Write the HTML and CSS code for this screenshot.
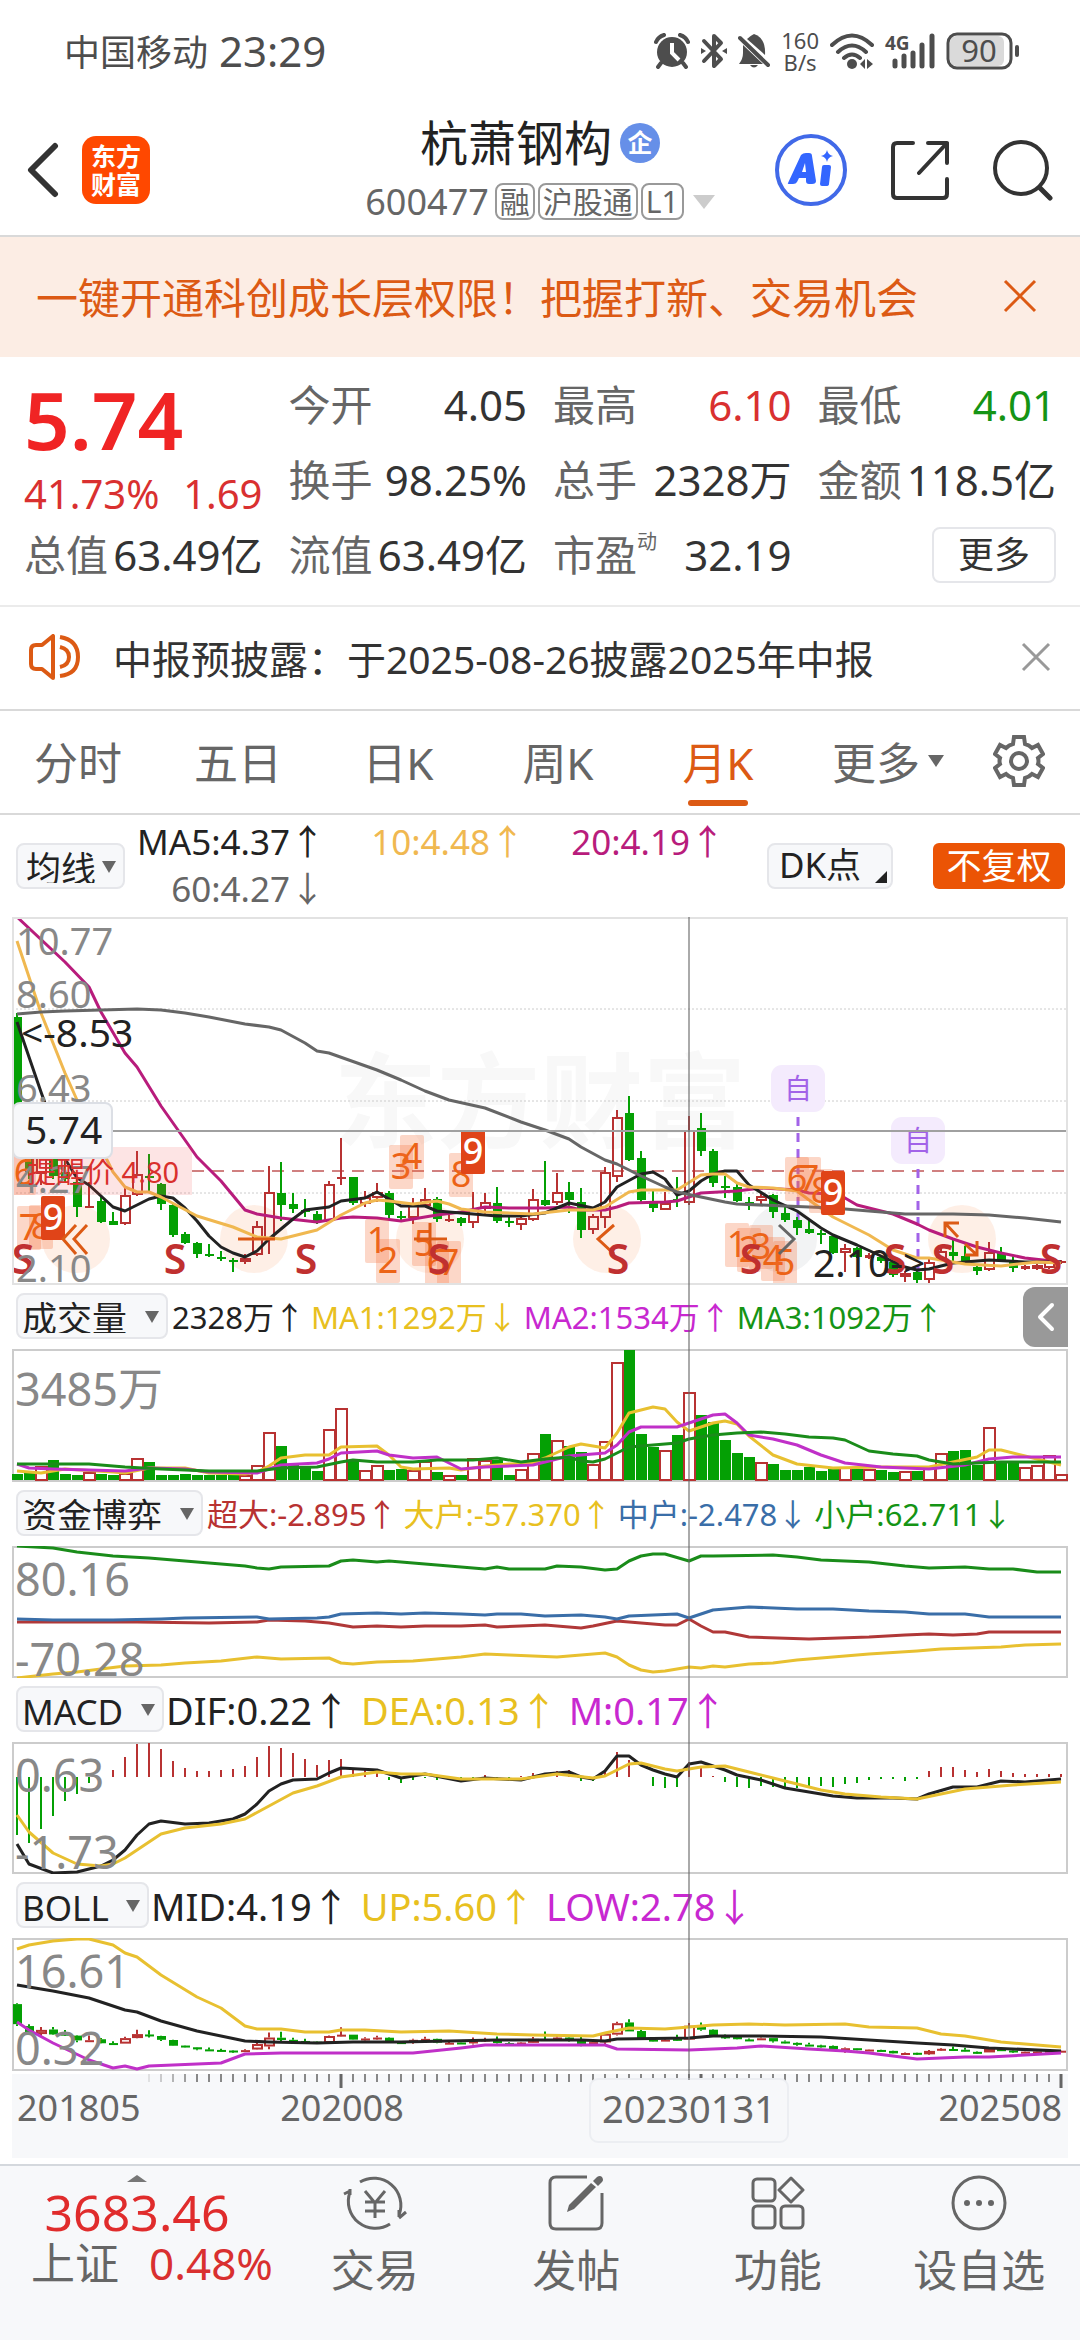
FILE: index.html
```html
<!DOCTYPE html>
<html lang="zh-CN">
<head>
  <meta charset="UTF-8" />
  <meta name="viewport" content="width=device-width, initial-scale=1.0" />
  <title>杭萧钢构 600477</title>
  <link rel="stylesheet" href="styles.css">
</head>
<body>

  <!-- Status bar -->
  <div class="status-bar">
    <div class="status-left">
      <span class="carrier">中国移动</span>
      <span class="clock">23:29</span>
    </div>
    <div class="status-right">
      <svg width="36" height="36" viewBox="0 0 36 36">
        <circle cx="18" cy="19" r="15" fill="#4d4d4d"/>
        <path d="M2 9 Q4 4 10 2 M34 9 Q32 4 26 2 M7 30 L4 34 M29 30 L32 34" stroke="#4d4d4d" stroke-width="4" stroke-linecap="round" fill="none"/>
        <path d="M18 10 V20 L25 27" stroke="#fff" stroke-width="4" fill="none"/>
      </svg>
      <svg width="26" height="36" viewBox="0 0 26 36">
        <path d="M3 8 L20 26 L13 33 V3 L20 10 L3 28" stroke="#4d4d4d" stroke-width="4" stroke-linejoin="round" stroke-linecap="round" fill="none"/>
        <path d="M0 15 L5 18 L0 21 Z M26 15 L21 18 L26 21 Z" fill="#4d4d4d"/>
      </svg>
      <svg width="32" height="36" viewBox="0 0 32 36">
        <path d="M9 6 Q12 3 16 1 Q28 5 27 22 Z" fill="#4d4d4d"/>
        <path d="M5 12 L25 31 H1 Q5 26 5 20 Z" fill="#4d4d4d"/>
        <path d="M2 5 L30 32" stroke="#4d4d4d" stroke-width="4" stroke-linecap="round"/>
        <path d="M12 32 H20 Q16 37 12 32 Z" fill="#4d4d4d"/>
      </svg>
      <span class="net-speed">160<br>B/s</span>
      <svg width="44" height="36" viewBox="0 0 44 36">
        <path d="M2 12 Q22 -7 42 12 M8 19 Q22 6 36 19 M14 25 Q22 18 30 25" stroke="#4d4d4d" stroke-width="4" stroke-linecap="round" fill="none"/>
        <circle cx="22" cy="31" r="5" fill="#4d4d4d"/>
        <path d="M30 31 L35 26 V36 M37 26 V36 L43 31" fill="#4d4d4d"/>
      </svg>
      <svg class="signal" width="50" height="36" viewBox="0 0 50 36">
        <text x="0" y="17" font-size="19" font-weight="700" fill="#4d4d4d">4G</text>
        <path d="M10 33 V28 M19 33 V23 M28 33 V20 M37 33 V12 M47 33 V3" stroke="#4d4d4d" stroke-width="5" stroke-linecap="round"/>
      </svg>
      <svg width="74" height="38" viewBox="0 0 74 38">
        <rect x="4" y="4" width="54" height="30" rx="6" fill="#dadada"/>
        <rect x="2" y="2" width="63" height="34" rx="9" fill="none" stroke="#4d4d4d" stroke-width="3"/>
        <rect x="69" y="13" width="4" height="12" rx="2" fill="#4d4d4d"/>
        <text x="33" y="30" font-size="31" text-anchor="middle" fill="#4d4d4d">90</text>
      </svg>
    </div>
  </div>

  <!-- Header -->
  <header class="header">
    <div class="header-left">
      <button class="icon-btn" aria-label="返回">
        <svg width="32" height="56" viewBox="0 0 32 56">
          <path d="M28 4 L4 28 L28 52" stroke="#333" stroke-width="6" stroke-linecap="round" stroke-linejoin="round" fill="none"/>
        </svg>
      </button>
      <div class="logo">东方<br>财富</div>
    </div>
    <div class="header-title">
      <h1>杭萧钢构 <span class="badge">企</span></h1>
      <div class="code-row">
        <span class="code">600477</span>
        <span class="tag">融</span>
        <span class="tag">沪股通</span>
        <span class="tag">L1</span>
        <i class="caret"></i>
      </div>
    </div>
    <div class="header-right">
      <button class="icon-btn" aria-label="AI 助手">
        <svg width="72" height="72" viewBox="0 0 72 72">
          <circle cx="36" cy="36" r="34" fill="none" stroke="#4169e8" stroke-width="4"/>
          <path fill="#3366ff" fill-rule="evenodd" d="M13 49 L26 21 Q28 19 31 19 H34 Q37 19 37 22 L41 47 Q41 50 37 50 H34 Q31 50 31 47 V44 H24 L22 48 Q21 50 18 50 H14 Q12 50 13 49 Z M27 38 H31 L30 29 Z"/>
          <path fill="#3366ff" d="M47 33 Q47 31 49 31 H54 Q56 31 56 33 L54 50 Q54 52 51 52 H47 Q45 52 45 50 Z M52 16 Q53 21 58 22 Q53 23 52 28 Q51 23 46 22 Q51 21 52 16 Z"/>
        </svg>
      </button>
      <button class="icon-btn" aria-label="分享">
        <svg width="58" height="60" viewBox="0 0 58 60">
          <path d="M22 3 H6 Q2 3 2 7 V54 Q2 58 6 58 H52 Q56 58 56 54 V39 M37 3 H56 V23 M56 3 L28 33" stroke="#333" stroke-width="4" stroke-linecap="round" stroke-linejoin="round" fill="none"/>
        </svg>
      </button>
      <button class="icon-btn" aria-label="搜索">
        <svg width="60" height="62" viewBox="0 0 60 62">
          <circle cx="28" cy="29" r="26" fill="none" stroke="#333" stroke-width="4"/>
          <path d="M47 49 L57 59" stroke="#333" stroke-width="5" stroke-linecap="round"/>
        </svg>
      </button>
    </div>
  </header>

  <!-- Promo banner -->
  <div class="banner">
    <a href="#">一键开通科创成长层权限！把握打新、交易机会</a>
    <button class="icon-btn" aria-label="关闭">
      <svg width="34" height="34" viewBox="0 0 34 34">
        <path d="M2 2 L32 32 M32 2 L2 32" stroke="#dc5a14" stroke-width="3"/>
      </svg>
    </button>
  </div>

  <!-- Quote -->
  <section class="quote">
    <div class="price-box">
      <div class="price">5.74</div>
      <div class="change"><span>41.73%</span><span>1.69</span></div>
    </div>
    <div class="stat"><span>今开</span><b>4.05</b></div>
    <div class="stat"><span>最高</span><b class="up">6.10</b></div>
    <div class="stat"><span>最低</span><b class="down">4.01</b></div>
    <div class="stat"><span>换手</span><b>98.25%</b></div>
    <div class="stat"><span>总手</span><b>2328万</b></div>
    <div class="stat"><span>金额</span><b>118.5亿</b></div>
    <div class="stat"><span>总值</span><b>63.49亿</b></div>
    <div class="stat"><span>流值</span><b>63.49亿</b></div>
    <div class="stat"><span>市盈<sup>动</sup></span><b>32.19</b></div>
    <div class="stat stat-more"><button class="more-btn">更多</button></div>
  </section>

  <!-- Notice -->
  <div class="notice">
    <svg width="52" height="46" viewBox="0 0 52 46">
      <path d="M24 2 V44 L13 35 H7 Q2 35 2 30 V16 Q2 11 7 11 H13 Z" stroke="#dc5a14" stroke-width="4" stroke-linejoin="round" fill="none"/>
      <path d="M31 3 Q49 6 49 23 Q49 40 31 42 M31 13 Q40 15 40 23 Q40 31 31 33" stroke="#dc5a14" stroke-width="4" fill="none"/>
    </svg>
    <span>中报预披露：于2025-08-26披露2025年中报</span>
    <button class="icon-btn" aria-label="关闭">
      <svg width="30" height="30" viewBox="0 0 30 30">
        <path d="M2 2 L28 28 M28 2 L2 28" stroke="#999" stroke-width="3"/>
      </svg>
    </button>
  </div>

  <!-- Period tabs -->
  <nav class="tabs">
    <button>分时</button>
    <button>五日</button>
    <button>日K</button>
    <button>周K</button>
    <button class="active">月K</button>
    <button class="tab-more">更多<i class="tri"></i></button>
    <button class="tab-gear" aria-label="设置">
      <svg width="52" height="54" viewBox="0 0 52 54">
        <path d="M21 3 H31 L32 10 Q36 11 39 14 L45 11 L50 20 L45 24 Q46 27 45 30 L50 34 L45 43 L39 40 Q36 43 32 44 L31 51 H21 L20 44 Q16 43 13 40 L7 43 L2 34 L7 30 Q6 27 7 24 L2 20 L7 11 L13 14 Q16 11 20 10 Z" stroke="#666" stroke-width="4" fill="none"/>
        <circle cx="26" cy="27" r="8" stroke="#666" stroke-width="4" fill="none"/>
      </svg>
    </button>
  </nav>

  <!-- Moving average row -->
  <div class="ma-row">
    <label class="pick pick-tight"><select aria-label="主图指标"><option>均线</option></select></label>
    <div class="ma-values">
      <span class="c-black">MA5:4.37↑</span>
      <span class="c-amber">10:4.48↑</span>
      <span class="c-pink">20:4.19↑</span>
      <span class="c-gray">60:4.27↓</span>
    </div>
    <button class="dk-btn">DK点</button>
    <button class="fq-btn">不复权</button>
  </div>

  <!-- Charts -->
  <main class="charts">
    <svg class="chart" viewBox="0 0 1056 368">
      <text class="watermark" x="322" y="223">东方财富</text>
      <path class="grid" d="M0 92 H1056 M0 184 H1056 M0 276 H1056"/>
      <path class="alert-line" d="M180 254 H1056"/>
      <g fill="#fde4d6" fill-opacity="0.6">
        <circle cx="64" cy="322" r="34"/>
        <circle cx="242" cy="322" r="34"/>
        <circle cx="418" cy="322" r="34"/>
        <circle cx="595" cy="322" r="34"/>
        <circle cx="950" cy="322" r="34"/>
      </g>
      <circle cx="771" cy="322" r="34" fill="#f2f3f4"/>
      <g class="added">
        <path d="M786 200 V303 M906 252 V355"/>
        <rect x="759" y="148" width="54" height="47" rx="11"/>
        <rect x="879" y="200" width="54" height="47" rx="11"/>
        <text x="786" y="182">自</text>
        <text x="906" y="234">自</text>
      </g>
      <g id="candles"></g>
      <g id="priceLines"></g>
      <rect x="0" y="230" width="180" height="48" fill="#f04a4a" fill-opacity="0.15"/>
      <g id="chips"></g>
      <path d="M64 308 L51 322 L64 337 M75 308 L62 322 L75 337 M226 322 H263 M402 322 H435 M418 306 V339 M602 308 L586 322 L602 337 M947 306 H933 V320 M933 306 L946 320 M953 338 H965 V324 M965 338 L953 327" stroke="#dc5a14" stroke-width="3" fill="none"/>
      <path d="M767 308 L782 322 L767 337" stroke="#666" stroke-width="3" fill="none"/>
      <g class="sell">
        <text x="11" y="357">S</text>
        <text x="163" y="357">S</text>
        <text x="294" y="357">S</text>
        <text x="427" y="357">S</text>
        <text x="606" y="357">S</text>
        <text x="739" y="357">S</text>
        <text x="883" y="357">S</text>
        <text x="931" y="357">S</text>
        <text x="1039" y="357">S</text>
      </g>
      <g class="axis-label small">
        <text x="4" y="38">10.77</text>
        <text x="4" y="91">8.60</text>
        <text x="4" y="185">6.43</text>
        <text x="4" y="276">4.27</text>
        <text x="4" y="365">2.10</text>
      </g>
      <text class="peak" x="9" y="130">&lt;-8.53</text>
      <text class="peak" x="801" y="360">2.10-&gt;</text>
      <text x="15" y="266" font-size="29" fill="#d9302c">提醒价 4.80</text>
      <path class="cross" d="M100 214 H1056"/>
      <rect x="1" y="186" width="99" height="55" rx="7" fill="#f7f8fa" stroke="#dcdfe5" stroke-width="2"/>
      <text class="peak" x="13" y="227">5.74</text>
      <rect class="frame" x="1" y="1" width="1054" height="366"/>
    </svg>

    <div class="chart-head narrow">
      <label class="pick"><select aria-label="副图一"><option>成交量</option></select></label>
      <span class="c-black">2328万↑</span>
      <span class="c-yellow">MA1:1292万↓</span>
      <span class="c-purple">MA2:1534万↑</span>
      <span class="c-green">MA3:1092万↑</span>
      <button class="collapse" aria-label="收起">
        <svg width="18" height="30" viewBox="0 0 18 30">
          <path d="M15 3 L3 15 L15 27" stroke="#fff" stroke-width="4" stroke-linecap="round" stroke-linejoin="round" fill="none"/>
        </svg>
      </button>
    </div>
    <svg class="chart" viewBox="0 0 1056 133">
      <rect class="frame thin" x="1" y="1" width="1054" height="131"/>
      <text class="axis-label" x="3" y="57">3485万</text>
      <g id="volumeBars"></g>
      <g id="volumeLines"></g>
    </svg>

    <div class="chart-head narrow">
      <label class="pick"><select aria-label="副图二"><option>资金博弈</option></select></label>
      <span class="c-red">超大:-2.895↑</span>
      <span class="c-yellow">大户:-57.370↑</span>
      <span class="c-blue">中户:-2.478↓</span>
      <span class="c-green">小户:62.711↓</span>
    </div>
    <svg class="chart" viewBox="0 0 1056 132">
      <rect class="frame thin" x="1" y="1" width="1054" height="130"/>
      <g id="fundLines"></g>
      <text class="axis-label" x="3" y="50">80.16</text>
      <text class="axis-label" x="3" y="130">-70.28</text>
    </svg>

    <div class="chart-head">
      <label class="pick"><select aria-label="副图三"><option>MACD</option></select></label>
      <span class="c-black">DIF:0.22↑</span>
      <span class="c-yellow">DEA:0.13↑</span>
      <span class="c-purple">M:0.17↑</span>
    </div>
    <svg class="chart" viewBox="0 0 1056 132">
      <rect class="frame thin" x="1" y="1" width="1054" height="130"/>
      <g id="macdBars"></g>
      <g id="macdLines"></g>
      <text class="axis-label" x="3" y="50">0.63</text>
      <text class="axis-label" x="3" y="127">-1.73</text>
    </svg>

    <div class="chart-head">
      <label class="pick"><select aria-label="副图四"><option>BOLL</option></select></label>
      <span class="c-black">MID:4.19↑</span>
      <span class="c-yellow">UP:5.60↑</span>
      <span class="c-purple">LOW:2.78↓</span>
    </div>
    <svg class="chart" viewBox="0 0 1056 133">
      <rect class="frame thin" x="1" y="1" width="1054" height="131"/>
      <g id="bollCandles"></g>
      <g id="bollLines"></g>
      <text class="axis-label" x="3" y="50">16.61</text>
      <text class="axis-label" x="3" y="127">0.32</text>
    </svg>

    <svg class="chart time-axis" viewBox="0 0 1056 84">
      <g id="ticks"></g>
      <text x="5" y="47">201805</text>
      <text x="330" y="47" text-anchor="middle">202008</text>
      <rect x="578" y="5" width="198" height="63" rx="8" fill="#f7f8fa" stroke="#eceef2" stroke-width="2"/>
      <text class="cur" x="677" y="49" text-anchor="middle">20230131</text>
      <text x="1050" y="47" text-anchor="end">202508</text>
    </svg>
    <div class="crosshair"></div>
  </main>

  <!-- Bottom bar -->
  <footer class="bottom-bar">
    <a class="index-box" href="#">
      <i class="tri-up"></i>
      <strong>3683.46</strong>
      <span class="index-row"><span>上证</span><em>0.48%</em></span>
    </a>
    <a class="nav-item" href="#">
      <svg width="66" height="58" viewBox="0 0 66 58">
        <path d="M18 8 A27 27 0 0 1 57 41 M48 50 A27 27 0 0 1 8 18 M8 17 L2 20 M8 15 V21 M57 44 L64 38 M57 43 V36" stroke="#666" stroke-width="3" fill="none"/>
        <path d="M23 17 L33 29 L43 17 M33 29 V44 M23 28 H43 M23 37 H43" stroke="#666" stroke-width="3" fill="none"/>
      </svg>
      <span>交易</span>
    </a>
    <a class="nav-item" href="#">
      <svg width="58" height="58" viewBox="0 0 58 58">
        <path d="M40 3 H9 Q3 3 3 9 V49 Q3 55 9 55 H49 Q55 55 55 49 V19" stroke="#666" stroke-width="3" fill="none"/>
        <path d="M20 38 L22 31 L44 9 L49 13 L27 35 Z M46 7 L50 3 Q53 1 55 3 Q57 6 55 8 L51 12 Z" fill="#666"/>
      </svg>
      <span>发帖</span>
    </a>
    <a class="nav-item" href="#">
      <svg width="54" height="58" viewBox="0 0 54 58">
        <g stroke="#666" stroke-width="3" fill="none">
          <rect x="2" y="5" width="22" height="22" rx="4"/>
          <rect x="2" y="32" width="22" height="22" rx="4"/>
          <rect x="30" y="32" width="22" height="22" rx="4"/>
          <path d="M40 4 L52 16 L40 28 L28 16 Z" stroke-linejoin="round"/>
        </g>
      </svg>
      <span>功能</span>
    </a>
    <a class="nav-item" href="#">
      <svg width="58" height="58" viewBox="0 0 58 58">
        <circle cx="29" cy="29" r="26" stroke="#666" stroke-width="3" fill="none"/>
        <circle cx="17" cy="29" r="3" fill="#666"/>
        <circle cx="29" cy="29" r="3" fill="#666"/>
        <circle cx="41" cy="29" r="3" fill="#666"/>
      </svg>
      <span>设自选</span>
    </a>
  </footer>

  <script src="script.js"></script>
</body>
</html>
```

FILE: styles.css
```css
* {
  box-sizing: border-box;
}

body {
  margin: 0;
  background: #fff;
  color: #333;
  font-family: "Noto Sans", "Noto Sans CJK SC", sans-serif;
}

button,
select {
  font-family: inherit;
  color: inherit;
  background: none;
  border: none;
  padding: 0;
  margin: 0;
}

a {
  color: inherit;
  text-decoration: none;
}

svg {
  display: block;
  flex-shrink: 0;
}

.icon-btn {
  display: flex;
  align-items: center;
  justify-content: center;
}

/* Status bar */
.status-bar {
  display: flex;
  justify-content: space-between;
  align-items: center;
  height: 104px;
  padding: 0 60px 3px 64px;
  color: #4d4d4d;
}

.status-left,
.status-right {
  display: flex;
  align-items: center;
  gap: 11px;
}

.carrier {
  font-size: 36px;
}

.clock {
  font-size: 42px;
}

.net-speed {
  font-size: 22px;
  line-height: 22px;
  text-align: center;
}

.signal {
  overflow: visible;
}

/* Header */
.header {
  display: grid;
  grid-template-columns: 1fr auto 1fr;
  align-items: center;
  height: 133px;
  padding: 0 27px;
  border-bottom: 2px solid #d9d9d9;
}

.header-left {
  display: flex;
  align-items: center;
  gap: 23px;
}

.logo {
  width: 68px;
  height: 68px;
  padding-top: 6px;
  border-radius: 14px;
  background: #ff4800;
  color: #fff;
  font-size: 25px;
  font-weight: 700;
  line-height: 28px;
  text-align: center;
}

.header-title h1 {
  display: flex;
  align-items: center;
  justify-content: center;
  gap: 8px;
  margin: 0;
  font-size: 48px;
  font-weight: 400;
  line-height: 64px;
  color: #222;
}

.badge {
  width: 40px;
  height: 40px;
  border-radius: 50%;
  background: #668fe8;
  color: #fff;
  font-size: 25px;
  font-weight: 700;
  line-height: 38px;
  text-align: center;
}

.code-row {
  display: flex;
  align-items: center;
  gap: 3px;
  height: 54px;
  color: #666;
}

.code {
  font-size: 36px;
  margin-right: 3px;
}

.tag {
  padding: 0 3px;
  border: 2px solid #999;
  border-radius: 8px;
  font-size: 30px;
  line-height: 33px;
}

.caret {
  margin-left: 6px;
  border: 11px solid transparent;
  border-top: 14px solid #ccc;
  border-bottom: none;
}

.header-right {
  display: flex;
  align-items: center;
  justify-content: flex-end;
  gap: 44px;
}

/* Banner */
.banner {
  display: flex;
  justify-content: space-between;
  align-items: center;
  height: 120px;
  padding: 0 43px 3px 36px;
  background: #fcede4;
  color: #dc5a14;
  font-size: 42px;
}

/* Quote */
.quote {
  display: grid;
  grid-template-columns: repeat(4, 1fr);
  grid-auto-rows: 75px;
  column-gap: 26px;
  padding: 12px 24px 11px;
  border-bottom: 2px solid #ebebeb;
}

.price-box {
  grid-row: span 2;
  color: #f02424;
}

.price {
  font-size: 80px;
  font-weight: 600;
  line-height: 100px;
}

.change {
  display: flex;
  justify-content: space-between;
  font-size: 40px;
  line-height: 50px;
  color: #d93030;
}

.stat {
  display: flex;
  justify-content: space-between;
  align-items: center;
  font-size: 42px;
  line-height: 56px;
  padding-bottom: 3px;
  white-space: nowrap;
  color: #666;
}

.stat b {
  font-weight: 400;
  color: #333;
}

.stat sup {
  font-size: 20px;
  line-height: 0;
  vertical-align: 22px;
}

.stat .up {
  color: #d93030;
}

.stat .down {
  color: #159415;
}

.stat-more {
  justify-content: flex-end;
}

.more-btn {
  width: 124px;
  height: 56px;
  border: 2px solid #e5e6ea;
  border-radius: 8px;
  color: #333;
  font-size: 36px;
  line-height: 48px;
}

/* Notice */
.notice {
  display: flex;
  align-items: center;
  height: 104px;
  padding: 0 29px 2px;
  border-bottom: 2px solid #d9d9d9;
  font-size: 39px;
}

.notice span {
  flex: 1;
  margin-left: 32px;
}

/* Tabs */
.tabs {
  display: grid;
  grid-template-columns: repeat(5, 8fr) 9fr 5fr;
  height: 104px;
  border-bottom: 2px solid #d9d9d9;
}

.tabs button {
  position: relative;
  padding: 0 4px 2px 0;
  font-size: 44px;
  color: #666;
}

.tabs .active {
  color: #dc5a14;
}

.tabs .active::after {
  content: "";
  position: absolute;
  left: 50%;
  bottom: 7px;
  width: 60px;
  height: 6px;
  margin-left: -32px;
  border-radius: 3px;
  background: #dc5a14;
}

.tabs .tab-more,
.tabs .tab-gear {
  display: flex;
  align-items: center;
  justify-content: center;
}

.tabs .tab-gear {
  justify-content: flex-start;
  padding-left: 13px;
}

.tri {
  margin-left: 8px;
  border: 8px solid transparent;
  border-top: 12px solid #666;
  border-bottom: none;
}

/* Moving average row */
.ma-row {
  display: flex;
  align-items: center;
  height: 102px;
  padding: 0 15px 0 16px;
}

.pick {
  position: relative;
  display: flex;
}

.pick select {
  appearance: none;
  height: 46px;
  padding: 0 38px 4px 4px;
  border: 2px solid #e5e6ea;
  border-radius: 8px;
  background: #f7f8fa;
  color: #222;
  font-size: 35px;
}

.pick::after {
  content: "";
  position: absolute;
  right: 9px;
  top: 18px;
  border: 7px solid transparent;
  border-top: 12px solid #666;
  border-bottom: none;
}

.pick-tight select {
  padding: 0 26px 4px 8px;
}

.ma-values {
  display: grid;
  grid-template-columns: 200px 200px 200px;
  justify-items: end;
  flex: 1;
  font-size: 35px;
  line-height: 47px;
  padding-bottom: 2px;
}

.dk-btn {
  position: relative;
  width: 126px;
  height: 46px;
  margin-right: 40px;
  padding: 0 20px 2px 0;
  border: 2px solid #e5e6ea;
  border-radius: 8px;
  background: #f7f8fa;
  color: #222;
  font-size: 35px;
  line-height: 38px;
  white-space: nowrap;
}

.dk-btn::after {
  content: "";
  position: absolute;
  right: 4px;
  bottom: 4px;
  border-left: 12px solid transparent;
  border-bottom: 12px solid #222;
}

.fq-btn {
  width: 132px;
  height: 46px;
  border-radius: 6px;
  background: #eb5405;
  color: #fff;
  font-size: 35px;
  line-height: 42px;
}

.c-black { color: #222; }
.c-gray { color: #666; }
.c-amber { color: #f0b850; }
.c-pink { color: #b81c7c; }
.c-yellow { color: #e8c020; }
.c-purple { color: #c828d0; }
.c-green { color: #159415; }
.c-red { color: #b83232; }
.c-blue { color: #3a6ea8; }

/* Charts */
.charts {
  position: relative;
  padding: 0 12px 6px;
}

.chart {
  width: 100%;
  height: auto;
}

.chart-head {
  position: relative;
  display: flex;
  align-items: center;
  gap: 11px;
  height: 64px;
  padding: 0 0 3px 4px;
  font-size: 38px;
  white-space: nowrap;
}

.chart-head .pick {
  margin-right: -9px;
}

.chart-head.narrow {
  gap: 6px;
  font-size: 31px;
}

.chart-head.narrow .pick {
  margin-right: -2px;
}

.collapse {
  position: absolute;
  right: 0;
  top: 2px;
  width: 45px;
  height: 60px;
  display: flex;
  align-items: center;
  justify-content: center;
  border-radius: 12px 0 0 12px;
  background: #999;
}

.crosshair {
  position: absolute;
  left: 63.7%;
  top: 0;
  bottom: 84px;
  width: 2px;
  background: rgba(100, 100, 100, 0.55);
}

.frame {
  fill: none;
  stroke: #e2e2e2;
  stroke-width: 2;
}

.frame.thin {
  stroke: #ccc;
}

.grid {
  stroke: #ccc;
  stroke-dasharray: 2 2;
}

.alert-line {
  stroke: #d08080;
  stroke-width: 2;
  stroke-dasharray: 12 8;
}

.cross {
  stroke: #a0a0a0;
  stroke-width: 2;
}

.watermark {
  font-size: 103px;
  font-weight: 700;
  fill: #f8f8f8;
}

.axis-label {
  font-size: 45px;
  fill: #888;
}

.axis-label.small {
  font-size: 38px;
}

.peak {
  font-size: 39px;
  fill: #222;
}

.sell {
  font-size: 41px;
  font-weight: 600;
  fill: #c03030;
  text-anchor: middle;
}

.added path {
  stroke: #a263e8;
  stroke-width: 3;
  stroke-dasharray: 9 7;
}

.added rect {
  fill: #f4ebfd;
}

.added text {
  font-size: 28px;
  fill: #a263e8;
  text-anchor: middle;
}

.chip rect {
  fill: #f56a32;
  fill-opacity: 0.27;
}

.chip text {
  font-size: 36px;
  fill: #ec6316;
  text-anchor: middle;
}

.chip.nine rect {
  fill: #e04418;
  fill-opacity: 1;
}

.chip.nine text {
  font-weight: 500;
  fill: #fff;
}

.time-axis {
  margin-top: 3px;
  background: #f7f8fa;
}

.time-axis text {
  font-size: 36px;
  fill: #666;
}

.time-axis .cur {
  font-size: 38px;
}

/* Bottom bar */
.bottom-bar {
  display: grid;
  grid-template-columns: 274px repeat(4, 1fr);
  height: 176px;
  border-top: 2px solid #d4d8dd;
  background: #f7f8fa;
  color: #666;
  font-size: 44px;
}

.index-box {
  display: flex;
  flex-direction: column;
  align-items: center;
  padding-top: 9px;
}

.tri-up {
  border: 10px solid transparent;
  border-bottom: 7px solid #777;
  border-top: none;
}

.index-box strong {
  font-size: 50px;
  font-weight: 400;
  line-height: 60px;
  color: #e02c2c;
}

.index-row {
  display: flex;
  gap: 30px;
  padding-left: 30px;
  line-height: 42px;
}

.index-row em {
  font-style: normal;
  color: #d93030;
}

.nav-item {
  display: flex;
  flex-direction: column;
  align-items: center;
  gap: 8px;
  padding-top: 8px;
  line-height: 60px;
}
```

FILE: script.js
```js
const NS = 'http://www.w3.org/2000/svg';
const STEP = 12;
const RED = '#b83232';
const GREEN = '#04a004';

function add(id, tag, attrs, text) {
  const el = document.createElementNS(NS, tag);
  for (const k in attrs) el.setAttribute(k, attrs[k]);
  if (text) el.textContent = text;
  document.getElementById(id).appendChild(el);
  return el;
}

function xOf(i) {
  return 5 + STEP * i;
}

// "month y, month y, ..." -> polyline
function line(id, color, data) {
  const points = data.split(',').map(p => {
    const [i, y] = p.trim().split(' ').map(Number);
    return xOf(i) + ',' + y;
  }).join(' ');
  add(id, 'polyline', { points, fill: 'none', stroke: color, 'stroke-width': 3, 'stroke-linejoin': 'round' });
}

// colour, high, body top, body bottom, low
const candles = [
  'g 96 100 205 215', 'g 205 215 255 262', 'r 220 235 257 268', 'g 220 233 259 262', 'g 235 255 262 266',
  'g 262 265 290 300', 'r 265 289 290 291', 'g 278 284 305 306', 'g 295 304 308 308', 'r 271 278 307 308',
  'r 234 257 278 279', 'g 237 259 261 275', 'g 266 267 287 293', 'g 287 288 318 320', 'g 315 317 326 327',
  'g 325 326 337 341', 'g 327 337 338 340', 'g 334 340 342 344', 'g 341 343 344 355', 'r 337 341 345 347',
  'r 304 309 338 339', 'r 249 275 322 337', 'g 245 276 288 304', 'g 276 287 292 296', 'g 282 293 295 300',
  'g 294 297 304 307', 'r 264 267 304 304', 'r 221 260 261 268', 'g 260 260 286 288', 'r 274 280 287 290',
  'r 266 275 281 285', 'g 274 276 298 302', 'g 294 299 301 305', 'r 281 287 301 307', 'r 271 282 289 290',
  'g 280 282 302 305', 'r 298 302 303 305', 'g 300 301 306 309', 'r 275 292 306 311', 'r 276 285 292 297',
  'g 270 286 304 306', 'g 300 304 306 310', 'r 299 301 308 313', 'r 272 282 303 304', 'g 244 283 288 289',
  'r 256 275 286 288', 'g 265 275 283 296', 'g 271 285 313 321', 'r 297 299 313 317', 'r 250 255 301 311',
  'r 193 200 260 265', 'g 179 196 243 244', 'g 234 241 283 285', 'g 272 286 291 295', 'r 275 286 293 293',
  'g 260 282 284 290', 'r 199 213 286 288', 'g 196 211 234 239', 'g 232 234 266 270', 'g 259 269 270 281',
  'g 267 270 284 285', 'g 280 285 286 293', 'r 275 279 284 287', 'g 277 278 295 301', 'g 290 296 303 305',
  'g 300 303 311 318', 'g 302 312 316 317', 'g 313 316 317 327', 'g 317 319 336 337', 'r 327 331 336 355',
  'g 330 331 340 341', 'r 336 338 341 342', 'g 339 340 344 346', 'g 344 345 358 360', 'r 354 356 360 365',
  'g 354 355 363 367', 'r 340 345 363 367', 'r 330 334 342 344', 'g 322 335 339 344', 'g 329 339 345 347',
  'g 347 350 354 358', 'r 325 335 353 354', 'g 330 336 343 345', 'g 338 343 351 355', 'r 348 349 352 353',
  'r 347 348 352 353', 'r 343 344 351 352', 'r 343 344 346 347'
].map(s => {
  const [c, ...v] = s.split(' ');
  return [c === 'r' ? RED : GREEN, ...v.map(Number)];
});

function drawCandles(id, scale) {
  candles.forEach(([color, high, top, bottom, low], i) => {
    const x = xOf(i);
    const [h, t, b, l] = [high, top, bottom, low].map(scale);
    const body = Math.max(b - t, 2);
    add(id, 'path', { d: `M${x} ${h} V${t} M${x} ${b} V${l}`, stroke: color, 'stroke-width': 2 });
    if (color === RED && body > 3) {
      add(id, 'rect', { x: x - 4, y: t + 1, width: 9, height: body - 2, fill: 'none', stroke: color, 'stroke-width': 2 });
    } else {
      add(id, 'rect', { x: x - 4, y: t, width: 9, height: body, fill: color });
    }
  });
}

drawCandles('candles', y => y);
// same prices on the 16.61 - 0.32 scale
drawCandles('bollCandles', y => 47 + y * 0.191);

line('priceLines', '#b81c7c', '0 0,4 45,6 70,7 95,9 136,10 150,12 189,15 240,17 264,19 293,20 297,22 301,25 305,27 301,28 300,30 301,32 304,33 302,35 298,37 295,39 290,41 291,44 291,46 290,47 293,49 293,50 290,51 286,54 285,55 284,57 276,60 274,62 271,65 273,66 276,68 277,69 281,70 288,73 297,75 307,76 313,78 322,80 330,82 336,84 341,87 345');
line('priceLines', '#222', '0 105,2 175,4 242,5 261,6 268,8 290,9 294,10 288,11 282,12 279,13 281,14 291,15 304,16 319,17 330,18 336,19 340,20 334,21 322,23 302,24 293,26 290,27 284,29 281,30 275,32 289,34 289,35 294,37 296,40 299,42 299,44 296,46 286,48 291,49 285,50 270,52 257,53 255,54 262,55 278,56 274,57 264,58 257,59 254,60 254,61 268,63 283,65 294,67 311,68 318,70 328,72 339,74 350,75 353,76 352,78 346,81 343,84 345,87 345');
line('priceLines', '#f0b850', '0 24,1 60,2 96,4 156,5 183,8 255,9 270,10 275,11 275,12 280,15 299,18 310,20 320,22 322,25 313,27 298,29 286,30 283,31 284,33 287,35 284,36 287,37 292,39 295,43 297,46 293,48 293,49 290,51 275,52 273,55 273,57 258,58 257,59 257,60 266,61 270,63 271,65 274,66 283,68 300,71 318,73 333,75 341,76 341,79 347,82 349,85 345,87 346');
line('priceLines', '#666', '0 97,2 95,4 94,7 93,10 92,12 93,14 96,16 100,19 107,21 110,22 113,24 126,25 134,26 136,30 153,32 163,34 174,36 183,39 191,42 205,44 213,46 222,47 230,49 243,50 247,52 259,54 270,55 275,57 280,59 285,60 287,64 289,68 291,71 294,74 297,78 297,81 298,84 301,87 305');

// nine-turn marks: number, x, y
const chips = [
  [6, 0, 234], [7, 5, 289], [8, 17, 288], [9, 29, 279],
  [1, 353, 302], [2, 364, 322], [3, 377, 228], [4, 388, 218],
  [5, 400, 305], [6, 413, 324], [7, 425, 324], [8, 437, 236], [9, 449, 213],
  [1, 713, 306], [2, 725, 311], [3, 737, 308], [4, 749, 320], [5, 761, 324],
  [6, 773, 240], [7, 785, 240], [8, 797, 252], [9, 809, 254]
];
chips.forEach(([n, x, y]) => {
  const g = add('chips', 'g', { class: n === 9 ? 'chip nine' : 'chip' });
  g.innerHTML = `<rect x="${x}" y="${y}" width="24" height="44" rx="2"/><text x="${x + 12}" y="${y + 34}">${n}</text>`;
});

const volumes = [
  6, 7, 14, 20, 6, 5, 8, 6, 5, 7, 22, 18, 5, 5, 6, 5, 5, 5, 5, 5, 15, 48,
  34, 16, 14, 9, 51, 72, 19, 10, 15, 10, 11, 10, 19, 8, 5, 5, 22, 20, 20, 5, 11, 27,
  46, 40, 34, 28, 16, 39, 118, 130, 46, 33, 30, 45, 88, 65, 58, 40, 27, 23, 18, 16, 10, 10,
  13, 9, 11, 13, 11, 11, 10, 8, 9, 9, 14, 27, 29, 30, 15, 53, 19, 17, 13, 15, 25, 6
];
volumes.forEach((v, i) => {
  const x = xOf(i);
  if (candles[i][0] === RED) {
    add('volumeBars', 'rect', { x: x - 5, y: 132 - v, width: 11, height: v - 1, fill: '#fff', stroke: RED, 'stroke-width': 2 });
  } else {
    add('volumeBars', 'rect', { x: x - 5, y: 131 - v, width: 11, height: v, fill: GREEN });
  }
});
line('volumeLines', '#e8c030', '0 122,2 124,4 120,8 123,9 124,11 119,14 119,16 124,19 125,20 123,21 117,22 109,24 106,26 106,27 98,30 97,31 106,32 118,33 120,36 119,37 121,39 117,41 115,43 114,44 109,46 98,47 95,49 99,50 84,51 64,53 58,54 60,55 73,56 82,58 74,59 72,60 75,61 87,63 106,65 115,68 119,72 118,76 118,78 113,80 108,81 101,82 101,84 107,86 113,87 116');
line('volumeLines', '#c030c8', '0 115,1 119,3 120,9 122,11 119,14 120,16 123,20 124,22 116,25 114,26 110,27 104,30 102,31 106,33 109,35 108,37 120,39 118,43 116,46 107,49 104,50 96,51 83,52 78,55 78,56 74,58 66,59 65,60 74,61 86,63 90,65 96,67 106,69 114,72 118,76 120,79 116,81 110,83 108,87 108');
line('volumeLines', '#1a8c1a', '0 115,6 115,9 118,12 120,16 122,20 122,22 119,25 118,27 113,28 111,30 113,33 113,35 111,38 111,40 109,42 113,44 110,46 108,47 112,48 113,49 110,51 98,52 97,55 94,56 90,58 86,60 84,62 83,64 85,66 88,68 89,69 91,71 102,73 105,75 107,76 111,78 115,82 113,84 113,87 113');

line('fundLines', '#1a8c1a', '0 0,3 2,5 6,8 10,11 12,14 15,16 17,19 20,20 22,21 23,22 21,26 20,27 15,28 14,30 16,31 15,33 17,36 20,39 23,40 21,41 23,44 23,45 20,47 21,49 24,50 23,51 15,52 10,53 8,54 8,56 15,57 10,58 10,63 9,65 11,67 14,71 16,74 20,76 22,79 21,81 23,83 23,85 26,87 26');
line('fundLines', '#b03838', '0 76,5 76,10 76,16 77,20 76,21 74,24 75,26 77,28 81,30 80,32 81,34 80,37 80,39 79,40 81,42 80,44 79,47 82,48 80,50 75,52 77,54 79,55 79,56 73,57 80,58 86,59 86,61 91,66 93,71 91,74 89,76 88,78 89,80 88,81 86,87 86');
line('fundLines', '#3a6ea8', '0 73,3 74,8 74,12 73,14 72,20 71,21 73,25 72,26 71,27 68,30 67,32 68,34 67,37 68,39 69,40 68,42 68,44 70,47 69,49 71,50 73,51 70,55 68,56 72,58 64,61 61,65 63,68 63,71 65,74 66,76 68,79 68,81 71,87 71');
line('fundLines', '#e8c030', '0 132,3 128,5 126,9 120,12 119,14 117,17 115,20 111,22 113,26 112,27 117,28 118,30 116,33 115,35 113,37 111,39 108,41 109,45 111,47 109,49 107,50 111,51 119,52 124,53 126,54 125,56 121,57 122,58 120,59 121,61 118,63 117,65 114,68 111,71 108,75 105,77 103,82 101,84 99,87 98');

const macd = [
  -58, -66, -52, -39, -24, -17, -6, 0, 7, 20, 33, 34, 28, 16, 9, 6, 6, 7, 8, 11, 20, 31,
  29, 24, 18, 12, 17, 18, 9, 7, 6, -3, -6, -3, -1, -3, -3, -3, -3, 2, -1, -1, 1, 4,
  3, 6, 7, -4, -4, 6, 25, 17, 0, -9, -11, -10, 15, 11, 1, -5, -10, -11, -9, -10, -11, -11,
  -11, -9, -10, -7, -6, -3, -2, -2, -4, -2, 6, 10, 10, 7, 5, 8, 6, 4, 3, 3, 3, 3
];
macd.forEach((v, i) => {
  add('macdBars', 'path', { d: `M${xOf(i)} 35 v${-v}`, stroke: v > 0 ? RED : GREEN, 'stroke-width': 2 });
});
line('macdLines', '#222', '0 102,1 122,3 131,5 130,7 124,8 118,9 108,10 93,11 82,12 79,14 82,16 81,18 77,19 72,20 62,21 49,22 42,23 38,25 37,26 31,27 26,30 28,32 36,34 32,37 39,39 36,42 38,44 32,46 30,47 35,48 37,49 29,50 14,51 14,52 23,53 28,54 32,55 35,56 22,57 20,59 28,60 33,62 38,64 46,66 50,68 54,70 56,73 56,75 57,76 52,78 45,80 45,82 39,84 40,87 37');
line('macdLines', '#e8c030', '0 73,1 90,3 111,5 122,7 124,8 122,9 116,10 108,12 92,14 86,17 82,19 77,21 64,23 51,25 44,27 35,30 30,32 32,34 32,37 37,42 37,45 32,48 36,49 34,50 28,51 22,52 21,54 27,55 29,57 25,59 24,61 30,63 36,65 42,67 48,69 52,72 55,75 57,77 52,79 47,83 43,87 40');

line('bollLines', '#e8c030', '0 11,1 7,3 3,5 1,6 1,8 7,9 15,10 19,12 37,15 59,17 70,19 88,20 91,22 91,24 94,26 94,27 92,29 92,32 94,36 93,40 96,43 97,48 98,49 95,51 90,54 91,58 87,61 86,64 87,69 86,71 89,75 90,77 96,79 98,82 104,84 106,87 109');
line('bollLines', '#222', '0 47,3 53,6 60,9 72,10 74,12 83,15 93,17 98,19 103,21 104,25 105,28 104,32 104,36 103,40 102,44 102,47 102,49 103,50 101,56 100,58 98,62 98,67 99,71 102,75 105,78 107,81 110,87 113');
line('bollLines', '#c030c8', '0 84,1 92,3 105,6 122,8 130,9 128,10 131,11 128,15 126,17 125,19 116,22 115,27 115,33 115,37 110,39 107,44 107,49 107,50 111,56 112,60 110,62 108,66 111,69 113,71 115,75 121,79 119,81 119,84 117,87 115');

// month ticks, the first year fades in
for (let i = 11; i < 88; i++) {
  const major = i === 27 || i === 57 || i === 87;
  add('ticks', 'path', {
    d: `M${xOf(i)} 0 v${major ? 14 : 8}`,
    stroke: major ? '#666' : '#888',
    'stroke-width': major ? 3 : 2,
    opacity: Math.min(1, (i - 10) / 5)
  });
}
```
